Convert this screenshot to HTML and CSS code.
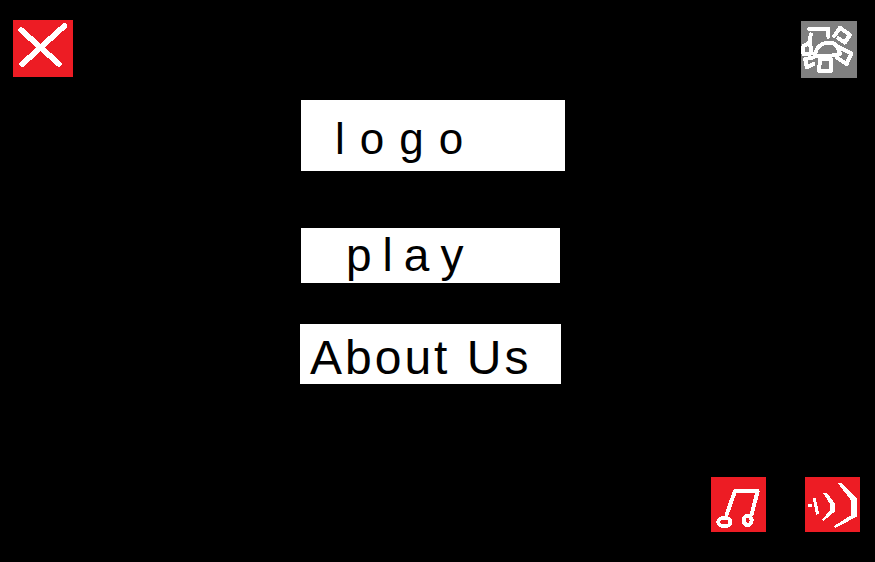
FILE: index.html
```html
<!DOCTYPE html>
<html>
	<head>
		<meta charset="utf-8">
		<meta name="viewport" content="width=device-width,initial-scale=1.0">
		<title>Menu</title>
		<link rel="stylesheet" href="styles.css">
	</head>
	<body>
		<div class="screen">
			<header class="top">
				<button class="icon close">
					<svg viewBox="24 24 180 171"><path class="thick" d="M48 54L162 156M178 42L52 156"/></svg>
				</button>
				<button class="icon gear">
					<svg viewBox="18 20 168 172">
						<path d="M42 44L100 44L100 68M60 118Q68 88 100 85Q130 85 135 120Q100 128 60 125Z"/>
						<path d="M75 135L108 135L108 170L72 170Z"/>
						<path d="M118 65L135 40L165 62L150 85L130 72"/>
						<path d="M135 100L170 118L155 150L125 130"/>
						<path d="M55 130L30 135L35 160L55 150"/>
						<path d="M47 60L44 85L25 95L25 120L50 118L44 85"/>
					</svg>
				</button>
			</header>
			<nav class="menu">
				<a class="item logo">logo</a>
				<a class="item play">play</a>
				<a class="item about">About Us</a>
			</nav>
			<footer class="bottom">
				<button class="icon music">
					<svg viewBox="18 18 165 165">
						<path d="M65 130L90 60L158 60L140 130"/>
						<ellipse cx="58" cy="153" rx="18" ry="13"/>
						<ellipse cx="128" cy="148" rx="12" ry="14"/>
					</svg>
				</button>
				<button class="icon sound">
					<svg viewBox="21 21 165 165">
						<circle class="dot" cx="36" cy="107" r="6"/>
						<polygon class="dot" points="44,84 52,82 64,132 54,134"/>
						<polygon class="dot" points="76,70 86,68 110,100 110,125 76,153 72,148 96,122 96,102"/>
						<polygon class="dot" points="118,38 130,38 176,85 176,140 112,174 108,168 160,135 160,92"/>
					</svg>
				</button>
			</footer>
		</div>
	</body>
</html>
```

FILE: styles.css
```css
* {
	margin: 0;
	padding: 0;
	box-sizing: border-box;
}

body {
	background: #000;
}

.screen {
	display: flex;
	flex-direction: column;
	width: 875px;
	height: 562px;
	overflow: hidden;
}

.top {
	display: flex;
	justify-content: space-between;
	padding: 20px 18px 0 13px;
}

.bottom {
	display: flex;
	justify-content: flex-end;
	gap: 39px;
	margin-top: auto;
	padding: 0 15px 30px 0;
}

.icon {
	display: block;
	border: 0;
	background: #ed1c24;
}

.icon svg {
	display: block;
	width: 100%;
	height: 100%;
	shape-rendering: crispEdges;
}

.icon path,
.icon ellipse {
	fill: none;
	stroke: #fff;
	stroke-width: 12;
	stroke-linecap: round;
	stroke-linejoin: round;
}

.icon .thick {
	stroke-width: 17;
}

.icon .dot {
	fill: #fff;
}

.close {
	width: 60px;
	height: 57px;
}

.gear {
	width: 56px;
	height: 57px;
	margin-top: 1px;
	background: #808080;
}

.music,
.sound {
	width: 55px;
	height: 55px;
}

.menu {
	display: flex;
	flex-direction: column;
	align-items: flex-start;
	margin: 22px 0 0 301px;
}

.item {
	display: block;
	background: #fff;
	color: #000;
	font-family: "Liberation Sans", Arial, sans-serif;
	white-space: nowrap;
	overflow: hidden;
}

.logo {
	width: 264px;
	height: 71px;
	padding-left: 34px;
	font-size: 44px;
	line-height: 78px;
	letter-spacing: 15px;
}

.play {
	width: 259px;
	height: 55px;
	margin-top: 57px;
	padding-left: 45px;
	font-size: 46px;
	line-height: 54px;
	letter-spacing: 11px;
}

.about {
	width: 261px;
	height: 60px;
	margin: 41px 0 0 -1px;
	padding-left: 10px;
	font-size: 48px;
	line-height: 68px;
	letter-spacing: 3px;
}
```
